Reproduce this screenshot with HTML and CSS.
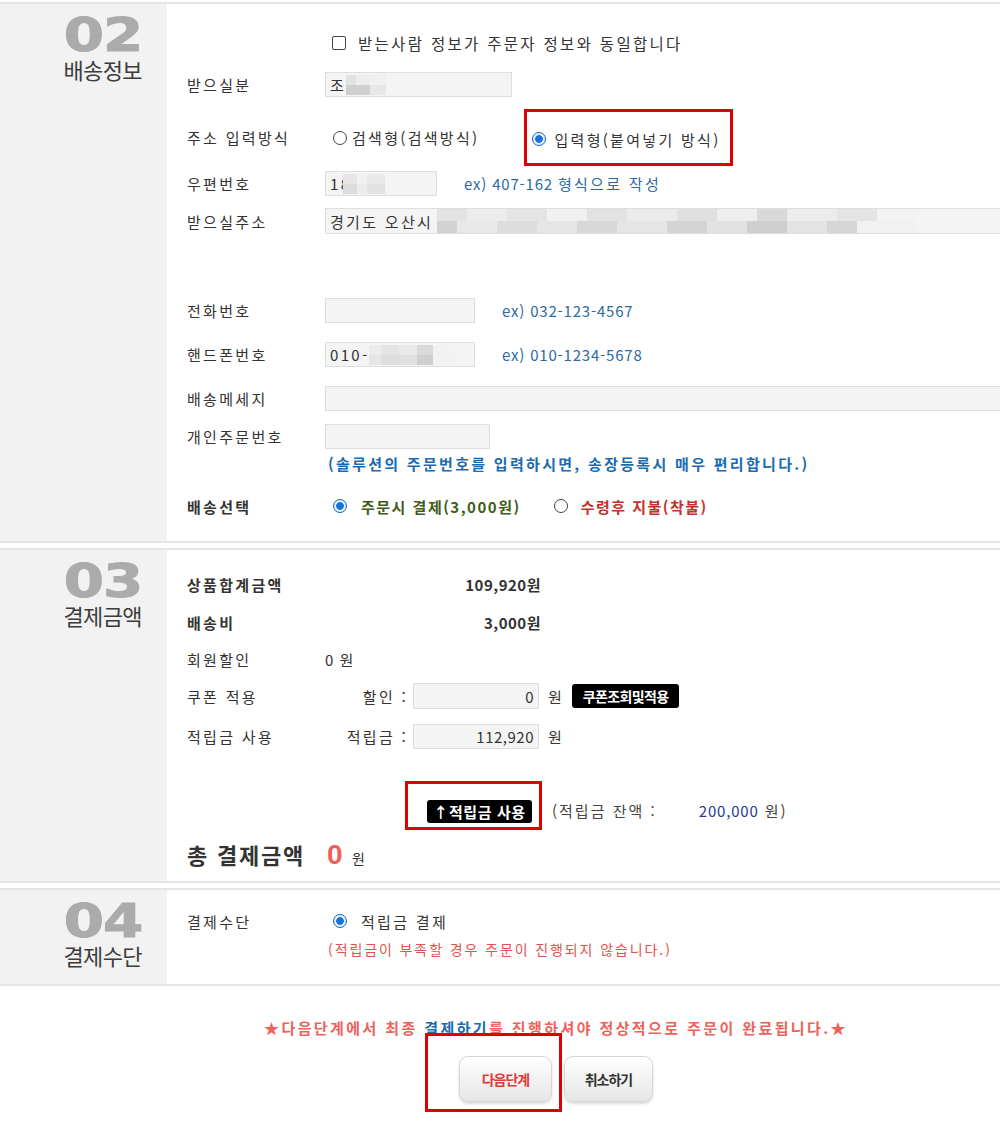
FILE: index.html
```html
<!DOCTYPE html>
<html lang="ko">

<head>
    <meta charset="UTF-8">
    <meta name="viewport" content="width=device-width, initial-scale=1.0">
    <title>주문서 작성</title>
    <link rel="stylesheet" href="styles.css">
</head>

<body>
    <div class="page">

        <!-- 02 배송정보 -->
        <div class="step">
            <div class="step-head">
                <div class="step-num">02</div>
                <div class="step-name">배송정보</div>
            </div>
            <div class="step-body ship">
                <div class="row">
                    <label class="same"><input type="checkbox" class="chk">받는사람 정보가 주문자 정보와 동일합니다</label>
                </div>
                <div class="row mt17">
                    <span class="lbl">받으실분</span>
                    <div class="field w187">조<span class="blur blur-name"></span></div>
                </div>
                <div class="row addr-type mt12">
                    <span class="lbl">주소 입력방식</span>
                    <label class="opt"><input type="radio" name="addrtype" class="rad">검색형(검색방식)</label>
                    <label class="opt mark-opt"><input type="radio" name="addrtype" class="rad" checked>입력형(붙여넣기 방식)</label>
                </div>
                <div class="row mt5">
                    <span class="lbl">우편번호</span>
                    <div class="field w112">18<span class="blur blur-zip"></span></div>
                    <span class="hint">ex) 407-162 <span class="hint-ko">형식으로 작성</span></span>
                </div>
                <div class="row h26 mt12">
                    <span class="lbl">받으실주소</span>
                    <div class="field wide">경기도 오산시<span class="blur blur-addr"></span></div>
                </div>
                <div class="row mt64">
                    <span class="lbl">전화번호</span>
                    <div class="field w150"></div>
                    <span class="hint">ex) 032-123-4567</span>
                </div>
                <div class="row mt19">
                    <span class="lbl">핸드폰번호</span>
                    <div class="field w150">010-<span class="blur blur-hp"></span></div>
                    <span class="hint">ex) 010-1234-5678</span>
                </div>
                <div class="row mt19">
                    <span class="lbl">배송메세지</span>
                    <div class="field wide"></div>
                </div>
                <div class="row mt13">
                    <span class="lbl">개인주문번호</span>
                    <div class="field w165"></div>
                </div>
                <p class="order-note">(솔루션의 주문번호를 입력하시면, 송장등록시 매우 편리합니다.)</p>
                <div class="row h20 mt22">
                    <span class="lbl b">배송선택</span>
                    <label class="opt opt-ship pay-now"><input type="radio" name="ship" class="rad" checked>주문시 결제(3,000원)</label>
                    <label class="opt opt-ship pay-later"><input type="radio" name="ship" class="rad">수령후 지불(착불)</label>
                </div>
            </div>
        </div>

        <!-- 03 결제금액 -->
        <div class="step">
            <div class="step-head">
                <div class="step-num">03</div>
                <div class="step-name">결제금액</div>
            </div>
            <div class="step-body price">
                <div class="row h20">
                    <span class="lbl b">상품합계금액</span>
                    <span class="amt">109,920원</span>
                </div>
                <div class="row h20 mt18">
                    <span class="lbl b">배송비</span>
                    <span class="amt">3,000원</span>
                </div>
                <div class="row h20 mt17">
                    <span class="lbl">회원할인</span>
                    <span class="plain">0 원</span>
                </div>
                <div class="row h26 mt14">
                    <span class="lbl">쿠폰 적용</span>
                    <span class="sub">할인 :</span>
                    <div class="field num w126">0</div>
                    <span class="won">원</span>
                    <button class="btn-black coupon">쿠폰조회및적용</button>
                </div>
                <div class="row mt15">
                    <span class="lbl">적립금 사용</span>
                    <span class="sub">적립금 :</span>
                    <div class="field num w126">112,920</div>
                    <span class="won">원</span>
                </div>
                <div class="row use-row mt32">
                    <div class="mark-use"><button class="btn-black">↑적립금 사용</button></div>
                    <span class="remain">(적립금 잔액 : <span class="remain-num">200,000</span> 원)</span>
                </div>
                <div class="row total mt8">
                    <span class="total-lbl">총 결제금액</span>
                    <span class="total-num">0</span>
                    <span class="total-won">원</span>
                </div>
            </div>
        </div>

        <!-- 04 결제수단 -->
        <div class="step">
            <div class="step-head">
                <div class="step-num">04</div>
                <div class="step-name">결제수단</div>
            </div>
            <div class="step-body method">
                <div class="row h20">
                    <span class="lbl">결제수단</span>
                    <label class="opt opt-ship"><input type="radio" name="method" class="rad" checked>적립금 결제</label>
                </div>
                <p class="pay-note">(적립금이 부족할 경우 주문이 진행되지 않습니다.)</p>
            </div>
        </div>

        <div class="foot">
            <p class="notice">★다음단계에서 최종 <span class="notice-link">결제하기</span>를 진행하셔야 정상적으로 주문이 완료됩니다.★</p>
            <div class="foot-btns">
                <div class="next-wrap">
                    <button class="btn-soft next">다음단계</button>
                    <span class="mark-next"></span>
                </div>
                <button class="btn-soft">취소하기</button>
            </div>
        </div>

    </div>
</body>

</html>
```

FILE: styles.css
```css
body {
    margin: 0;
    background: #fff;
    color: #333;
    font-family: "Noto Sans CJK KR", "Noto Sans", sans-serif;
    font-size: 15px;
    letter-spacing: 2.3px;
}

p {
    margin: 0;
}

button {
    font-family: inherit;
    cursor: pointer;
}

.page {
    width: 1000px;
    overflow: hidden;
    padding-top: 2px;
}

/* steps */
.step {
    display: flex;
    border-top: 2px solid #e4e4e4;
    border-bottom: 2px solid #e4e4e4;
    margin-bottom: 5px;
}

.step-head {
    flex: none;
    width: 142px;
    padding-right: 25px;
    background: #f2f2f2;
    text-align: right;
}

.step-num {
    padding-top: 9px;
    height: 44px;
    font-family: "DejaVu Sans", sans-serif;
    font-weight: bold;
    font-size: 46px;
    line-height: 44px;
    letter-spacing: -1px;
    color: #ababab;
    -webkit-text-stroke: 1px #ababab;
    transform: scaleX(1.26);
    transform-origin: right;
}

.step-name {
    font-size: 22px;
    line-height: 24px;
    letter-spacing: -0.6px;
    color: #3c3c3c;
}

.step-body {
    flex: 1;
    padding-left: 20px;
}

.ship {
    padding-top: 26px;
    padding-bottom: 25px;
}

.price {
    padding-top: 24px;
    padding-bottom: 19px;
}

.method {
    padding-top: 21px;
    padding-bottom: 25px;
}

/* rows */
.row {
    display: flex;
    align-items: center;
    height: 25px;
    white-space: nowrap;
}

.h20 { height: 20px; }
.h26 { height: 26px; }
.mt5 { margin-top: 5px; }
.mt8 { margin-top: 8px; }
.mt12 { margin-top: 12px; }
.mt13 { margin-top: 13px; }
.mt14 { margin-top: 14px; }
.mt15 { margin-top: 15px; }
.mt17 { margin-top: 17px; }
.mt18 { margin-top: 18px; }
.mt19 { margin-top: 19px; }
.mt22 { margin-top: 22px; }
.mt32 { margin-top: 32px; }
.mt64 { margin-top: 64px; }

.lbl {
    flex: none;
    width: 138px;
}

.b {
    font-weight: bold;
}

.same {
    display: flex;
    align-items: center;
    margin-left: 145px;
    font-size: 15.5px;
}

.field {
    box-sizing: border-box;
    display: flex;
    align-items: center;
    height: 100%;
    padding: 0 4px;
    background: #f4f4f4;
    border: 1px solid #dedede;
    overflow: hidden;
}

.w112 { width: 112px; }
.w126 { width: 126px; }
.w150 { width: 150px; }
.w165 { width: 165px; }
.w187 { width: 187px; }
.wide { width: 720px; flex: none; }

.field.num {
    justify-content: flex-end;
    letter-spacing: 0.5px;
}

.hint {
    margin-left: 27px;
    color: #2b6aa6;
    letter-spacing: 0.8px;
}

.hint-ko {
    letter-spacing: 2.3px;
}

/* pixelated private data */
.blur {
    display: inline-block;
    height: 20px;
    background-repeat: no-repeat;
    background-size: 100% 50%;
    background-position: top, bottom;
}

.blur-name {
    width: 40px;
    background-image:
        linear-gradient(to right, #e2e2e2 0 10px, #ededed 10px 24px, #f0f0f0 24px 40px),
        linear-gradient(to right, #cfcfcf 0 10px, #d0d0d0 10px 24px, #e7e7e7 24px 40px);
}

.blur-zip {
    width: 42px;
    margin-left: -8px;
    background-image:
        linear-gradient(to right, #e6e6e6 0 14px, #f1f1f1 14px 24px, #e9e9e9 24px 42px),
        linear-gradient(to right, #dcdcdc 0 14px, #ececec 14px 24px, #e2e2e2 24px 42px);
}

.blur-hp {
    width: 86px;
    background-image:
        linear-gradient(to right, #ececec 0 12px, #e4e4e4 12px 30px, #e9e9e9 30px 48px, #d9d9d9 48px 64px, #f2f2f2 64px 86px),
        linear-gradient(to right, #e6e6e6 0 12px, #dedede 12px 30px, #e0e0e0 30px 48px, #cfcfcf 48px 64px, #f2f2f2 64px 86px);
}

.blur-addr {
    width: 480px;
    height: 26px;
    margin-left: 4px;
    background-image:
        linear-gradient(to right, #e3e3e3 0 30px, #ececec 30px 70px, #e4e4e4 70px 110px, #f0f0f0 110px 150px, #e2e2e2 150px 190px,
            #ebebeb 190px 240px, #e0e0e0 240px 280px, #eeeeee 280px 320px, #d9d9d9 320px 350px, #ececec 350px 400px, #e4e4e4 400px 440px, #f3f3f3 440px 480px),
        linear-gradient(to right, #d2d2d2 0 20px, #e8e8e8 20px 60px, #dcdcdc 60px 100px, #e6e6e6 100px 140px, #d8d8d8 140px 180px,
            #e5e5e5 180px 230px, #d4d4d4 230px 270px, #e2e2e2 270px 310px, #cfcfcf 310px 350px, #e3e3e3 350px 390px, #d6d6d6 390px 420px, #f1f1f1 420px 480px);
}

/* radios and checkbox */
.chk,
.rad {
    appearance: none;
    -webkit-appearance: none;
    flex: none;
    width: 14px;
    height: 14px;
    margin: 0 11px 0 0;
    background: #fff;
    border: 1px solid #444;
}

.chk {
    border-radius: 2px;
    margin-right: 12px;
}

.rad {
    border-radius: 50%;
    margin-right: 5px;
}

.rad:checked {
    border-color: #0b63c4;
    background: radial-gradient(circle, #1672e0 0 3.5px, #e8f1fd 4.2px);
}

.opt {
    display: flex;
    align-items: center;
}

.addr-type {
    height: 57px;
}

.addr-type .opt:first-of-type {
    margin-left: 8px;
}

.mark-opt {
    align-self: stretch;
    box-sizing: border-box;
    margin-left: 45px;
    padding: 3px 9px 0 5px;
    border: 3px solid #e00000;
}

.mark-opt .rad {
    margin-right: 8px;
}

.order-note {
    height: 20px;
    margin: 5px 0 0 141px;
    line-height: 20px;
    color: #1b6bb0;
    font-weight: bold;
    letter-spacing: 2.3px;
    white-space: nowrap;
}

.opt-ship {
    margin-left: 8px;
    font-weight: bold;
}

.opt-ship .rad {
    margin-right: 14px;
}

.pay-now {
    color: #3f5c16;
    letter-spacing: 1.5px;
}

.pay-later {
    margin-left: 33px;
    color: #c4302b;
    letter-spacing: 1.5px;
}

.pay-later .rad {
    margin-right: 13px;
}

.method .opt-ship {
    font-weight: normal;
    color: #333;
}

/* price */
.amt {
    width: 216px;
    text-align: right;
    font-weight: bold;
    letter-spacing: 0.5px;
}

.plain {
    letter-spacing: 1px;
}

.sub {
    width: 83px;
    margin-right: 5px;
    text-align: right;
}

.won {
    margin-left: 9px;
}

.btn-black {
    height: 24px;
    padding: 0 4px;
    border: none;
    border-radius: 3px;
    background: #000;
    color: #fff;
    font-size: 14px;
    font-weight: bold;
    letter-spacing: -0.6px;
    white-space: nowrap;
}

.coupon {
    margin-left: 8px;
    width: 107px;
}

.use-row {
    height: 49px;
    align-items: flex-end;
}

.mark-use {
    box-sizing: border-box;
    width: 137px;
    height: 49px;
    margin-left: 218px;
    padding: 16px 7px 4px 19px;
    border: 3px solid #e00000;
}

.mark-use .btn-black {
    width: 105px;
    height: 23px;
    font-size: 15px;
    letter-spacing: 0.6px;
}

.remain {
    margin-left: 10px;
    line-height: 25px;
    margin-bottom: 7px;
    color: #444;
    letter-spacing: 2px;
}

.remain-num {
    margin-left: 36px;
    color: #2b3990;
    letter-spacing: 0.8px;
}

.total {
    height: 24px;
    align-items: baseline;
}

.total-lbl {
    width: 140px;
    font-size: 22px;
    font-weight: bold;
    letter-spacing: 1.8px;
}

.total-num {
    color: #ef5f57;
    font-size: 28px;
    font-weight: bold;
    font-family: "Liberation Sans", sans-serif;
}

.total-won {
    margin-left: 7px;
    font-size: 14px;
}

.pay-note {
    height: 20px;
    margin: 8px 0 0 141px;
    line-height: 20px;
    font-size: 14px;
    letter-spacing: 1.9px;
    color: #e0534e;
    white-space: nowrap;
}

/* bottom */
.foot {
    padding-left: 112px;
    text-align: center;
}

.notice {
    margin-top: 32px;
    line-height: 20px;
    font-weight: bold;
    color: #ef625b;
    letter-spacing: 2.4px;
}

.notice-link {
    color: #1b6bb0;
}

.foot-btns {
    display: flex;
    justify-content: center;
    gap: 12px;
    margin-top: 18px;
    padding-bottom: 30px;
}

.next-wrap {
    position: relative;
}

.btn-soft {
    height: 46px;
    width: 89px;
    border: 1px solid #d6d6d6;
    border-radius: 9px;
    background: linear-gradient(#ffffff, #e6e6e6);
    box-shadow: 0 2px 3px rgba(0, 0, 0, 0.15);
    color: #333;
    font-size: 14px;
    font-weight: bold;
    letter-spacing: -1px;
}

.next {
    width: 93px;
    color: #e0393a;
}

/* highlight drawn over the next button */
.mark-next {
    position: absolute;
    left: -34px;
    top: -23px;
    width: 137px;
    height: 79px;
    box-sizing: border-box;
    border: 3px solid #e00000;
}
```
